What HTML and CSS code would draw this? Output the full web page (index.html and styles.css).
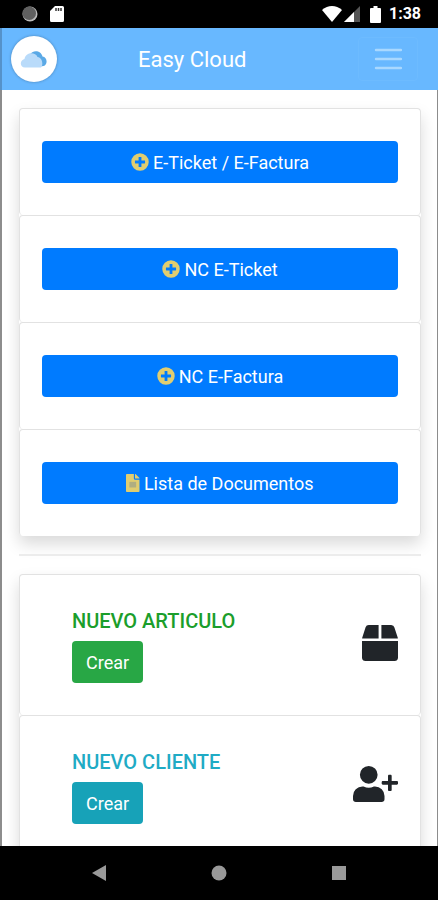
FILE: index.html
```html
<!DOCTYPE html>
<html lang="es">
<head>
    <meta charset="UTF-8">
    <meta name="viewport" content="width=device-width, initial-scale=1.0">
    <title>Easy Cloud</title>
    <link rel="stylesheet" href="styles.css">
</head>
<body>

    <!-- Status Bar -->
    <div class="status-bar">
        <svg width="16" height="16" viewBox="0 0 16 16">
            <circle cx="8" cy="8" r="7.5" fill="#bbb"/>
            <circle cx="7.2" cy="7.2" r="6.8" fill="#606060"/>
        </svg>
        <svg width="14" height="16" viewBox="0 0 14 16">
            <path d="M5 0h7.500A1.500 1.500 0 0 1 14 1.500v13a1.500 1.500 0 0 1-1.500 1.500h-11A1.500 1.500 0 0 1 0 14.500V5z" fill="#fff"/>
            <path d="M6 2v3M8.500 2v3M11 2v3" stroke="#333" stroke-width="1.500"/>
        </svg>
        <div class="status-right">
            <svg width="20" height="16" viewBox="0 0 20 16">
                <path d="M0 4C6-1.300 14-1.300 20 4L10 16z" fill="#fff"/>
            </svg>
            <svg width="16" height="16" viewBox="0 0 16 16">
                <path d="M16 0v16H0z" fill="#555"/>
                <path d="M10 6v10H0z" fill="#fff"/>
            </svg>
            <svg class="battery" width="11" height="17" viewBox="0 0 11 17">
                <path d="M3.500 0h4v2H10a1 1 0 0 1 1 1v13a1 1 0 0 1-1 1H1a1 1 0 0 1-1-1V3a1 1 0 0 1 1-1h2.500z" fill="#fff"/>
            </svg>
            <span class="clock">1:38</span>
        </div>
    </div>

    <!-- Header -->
    <header class="navbar">
        <a class="logo" href="#" aria-label="Easy Cloud">
            <svg width="28" height="18" viewBox="0 0 28 18">
                <path d="M10 4.500C12 0 21-.5 22.500 6.500c5 .5 5.500 8 1 9.500L17 17z" fill="#5aa9e6"/>
                <path d="M5 17.500C-.5 17.500-.5 10 4.500 9 5.500 2 15.500 1.500 17.500 7c5 .5 6 8 3.500 10.500z" fill="#b9dbfa"/>
            </svg>
        </a>
        <span class="brand">Easy Cloud</span>
        <button class="toggler" type="button" aria-label="Menu">
            <svg width="28" height="22" viewBox="0 0 28 22">
                <path d="M2 2h25M2 11h25M2 20h25" stroke="#a9d8ff" stroke-width="2.400" stroke-linecap="round"/>
            </svg>
        </button>
    </header>

    <!-- Content -->
    <main class="content">
        <div class="card-group">
            <div class="card">
                <button class="btn btn-primary" type="button">
                    <svg class="plus" viewBox="0 0 512 512"><path d="M256 8a248 248 0 1 0 0 496 248 248 0 0 0 0-496zm144 276c0 7-5 12-12 12h-92v92c0 7-5 12-12 12h-56c-7 0-12-5-12-12v-92h-92c-7 0-12-5-12-12v-56c0-7 5-12 12-12h92v-92c0-7 5-12 12-12h56c7 0 12 5 12 12v92h92c7 0 12 5 12 12z"/></svg>
                    E-Ticket / E-Factura
                </button>
            </div>
            <div class="card">
                <button class="btn btn-primary" type="button">
                    <svg class="plus" viewBox="0 0 512 512"><path d="M256 8a248 248 0 1 0 0 496 248 248 0 0 0 0-496zm144 276c0 7-5 12-12 12h-92v92c0 7-5 12-12 12h-56c-7 0-12-5-12-12v-92h-92c-7 0-12-5-12-12v-56c0-7 5-12 12-12h92v-92c0-7 5-12 12-12h56c7 0 12 5 12 12v92h92c7 0 12 5 12 12z"/></svg>
                    NC E-Ticket
                </button>
            </div>
            <div class="card">
                <button class="btn btn-primary" type="button">
                    <svg class="plus" viewBox="0 0 512 512"><path d="M256 8a248 248 0 1 0 0 496 248 248 0 0 0 0-496zm144 276c0 7-5 12-12 12h-92v92c0 7-5 12-12 12h-56c-7 0-12-5-12-12v-92h-92c-7 0-12-5-12-12v-56c0-7 5-12 12-12h92v-92c0-7 5-12 12-12h56c7 0 12 5 12 12v92h92c7 0 12 5 12 12z"/></svg>
                    NC E-Factura
                </button>
            </div>
            <div class="card">
                <button class="btn btn-primary" type="button">
                    <svg class="file" viewBox="0 0 384 512"><path d="M224 136V0H24C11 0 0 11 0 24v464c0 13 11 24 24 24h336c13 0 24-11 24-24V160H248c-13 0-24-11-24-24zM384 121v7H256V0h6c6 0 12 3 17 7l98 98c4 4 7 10 7 16z"/><path class="lines" d="M96 224h192v160H96z"/></svg>
                    Lista de Documentos
                </button>
            </div>
        </div>

        <hr>

        <div class="card-group">
            <div class="card card-row">
                <div class="card-text">
                    <h2 class="title-success">NUEVO ARTICULO</h2>
                    <button class="btn btn-success" type="button">Crear</button>
                </div>
                <svg class="card-icon" width="36" height="36" viewBox="0 0 512 512">
                    <path d="M510 184 461 37A48 48 0 0 0 415 0H276v192h233c0-3 2-5 1-8zM236 0H97a48 48 0 0 0-46 33L2 184c-1 3 1 5 1 8h233zM0 228v236c0 27 21 48 48 48h416c27 0 48-21 48-48V228z"/>
                </svg>
            </div>
            <div class="card card-row">
                <div class="card-text">
                    <h2 class="title-info">NUEVO CLIENTE</h2>
                    <button class="btn btn-info" type="button">Crear</button>
                </div>
                <svg class="card-icon" width="45" height="36" viewBox="0 0 640 512">
                    <path d="M624 214h-74v-74c0-9-7-16-16-16h-20c-9 0-16 7-16 16v74h-74c-9 0-16 7-16 16v20c0 9 7 16 16 16h74v74c0 9 7 16 16 16h20c9 0 16-7 16-16v-74h74c9 0 16-7 16-16v-20c0-9-7-16-16-16zM224 252a126 126 0 1 0 0-252 126 126 0 0 0 0 252zm90 40h-17a174 174 0 0 1-146 0h-17A134 134 0 0 0 0 426v46c0 24 18 40 40 40h368c22 0 40-16 40-40v-46a134 134 0 0 0-134-134z"/>
                </svg>
            </div>
        </div>
    </main>

    <!-- Navigation Bar -->
    <nav class="system-nav">
        <button type="button" aria-label="Atrás">
            <svg width="16" height="16" viewBox="0 0 16 16"><path d="M15 0v16L1 8z" fill="#999"/></svg>
        </button>
        <button type="button" aria-label="Inicio">
            <svg width="16" height="16" viewBox="0 0 16 16"><circle cx="8" cy="8" r="7.5" fill="#999"/></svg>
        </button>
        <button type="button" aria-label="Recientes">
            <svg width="16" height="16" viewBox="0 0 16 16"><rect x="1" y="1" width="14" height="14" fill="#999"/></svg>
        </button>
    </nav>

</body>
</html>
```
FILE: styles.css
```css
/* General Styles */
* {
    box-sizing: border-box;
}

body {
    font-family: Roboto, sans-serif;
    font-size: 18px;
    color: #212529;
    background-color: #fff;
    margin: 0;
    height: 100vh;
    display: flex;
    flex-direction: column;
}

svg {
    display: block;
    flex-shrink: 0;
}

button {
    font-family: inherit;
    cursor: pointer;
}

/* Status Bar */
.status-bar {
    display: flex;
    align-items: center;
    gap: 12px;
    height: 28px;
    padding: 0 17px 0 22px;
    background-color: #000;
    color: #fff;
    flex-shrink: 0;
}

.status-right {
    display: flex;
    align-items: center;
    gap: 2px;
    margin-left: auto;
}

.battery {
    margin: 0 6px 0 8px;
}

.clock {
    font-size: 16px;
    font-weight: 700;
    line-height: 20px;
}

/* Header */
.navbar {
    display: flex;
    align-items: center;
    height: 62px;
    padding: 0 20px 0 9px;
    background-color: #68b8ff;
    border-left: 2px solid #5592ca;
    flex-shrink: 0;
}

.logo {
    display: flex;
    align-items: center;
    justify-content: center;
    width: 46px;
    height: 46px;
    border-radius: 50%;
    background-color: #fff;
    box-shadow: 0 0 3px rgba(0, 0, 0, 0.3);
}

.brand {
    margin-left: 81px;
    font-size: 22px;
    color: #fff;
}

.toggler {
    display: flex;
    align-items: center;
    justify-content: center;
    width: 60px;
    height: 44px;
    margin-left: auto;
    padding: 0;
    background: none;
    border: 1px solid #6dbbff;
    border-radius: 4px;
}

/* Content */
.content {
    flex: 1;
    min-height: 0;
    overflow: hidden;
    padding: 18px 16px 0 17px;
    border-left: 2px solid #8c8c8c;
    border-right: 1px solid #8c8c8c;
}

.card-group {
    border-radius: 4px;
    box-shadow: 0 8px 16px rgba(0, 0, 0, 0.15);
}

.card {
    padding: 32px 22px;
    background-color: #fff;
    border: 1px solid #e2e2e2;
    border-bottom: none;
    border-radius: 4px;
}

.card-row {
    display: flex;
    align-items: center;
    justify-content: space-between;
}

.card-text {
    padding-left: 30px;
}

.card-icon {
    margin-bottom: 4px;
    fill: #212529;
}

.card h2 {
    margin: 0 0 6px;
    font-size: 20px;
    font-weight: 500;
    line-height: 28px;
}

.title-success {
    color: #1b9e2b;
}

.title-info {
    color: #1fabc5;
}

hr {
    margin: 18px 0;
    border: none;
    border-top: 2px solid #ececec;
}

/* Buttons */
.btn {
    display: flex;
    align-items: center;
    justify-content: center;
    height: 42px;
    padding: 0 14px;
    border: none;
    border-radius: 4px;
    font-size: 18px;
    color: #fff;
}

.btn-primary {
    width: 100%;
    background-color: #007bff;
}

.btn-success {
    background-color: #28a745;
}

.btn-info {
    background-color: #17a2b8;
}

.plus,
.file {
    height: 18px;
    margin-right: 4px;
    fill: #e0cd70;
}

.file .lines {
    fill: #8f9a8c;
    opacity: 0.6;
}

/* Navigation Bar */
.system-nav {
    display: flex;
    align-items: center;
    justify-content: center;
    gap: 104px;
    height: 54px;
    background-color: #000;
    flex-shrink: 0;
}

.system-nav button {
    padding: 0;
    background: none;
    border: none;
}
```
